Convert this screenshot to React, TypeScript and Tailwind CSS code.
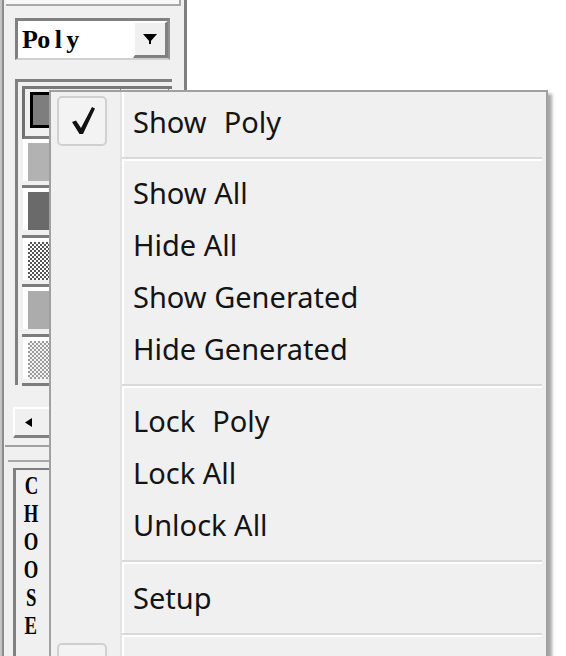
import React from "react";

function CheckIcon() {
  return (
    <svg width="46" height="46" viewBox="0 0 46 46">
      <path d="M13 24 L17 22.5 L22 30 L33 9 L36 10.5 L24 36 L20.5 36 Z" fill="#111" />
    </svg>
  );
}

function Row({ icon, children }: { icon?: React.ReactNode; children?: React.ReactNode }) {
  return (
    <div className="flex h-[52px] shrink-0">
      <div className="w-[69px] shrink-0 flex items-center pl-[6px]">{icon}</div>
      <div className="flex-1 flex items-center pl-[11px] border-l-[2px] border-[#e2e3e3] shadow-[inset_2px_0_0_#ffffff] whitespace-pre">
        {children}
      </div>
    </div>
  );
}

function Sep({ h = "h-[19px]" }: { h?: string }) {
  return (
    <div className={"flex shrink-0 " + h}>
      <div className="w-[69px] shrink-0" />
      <div className="flex-1 border-l-[2px] border-[#e2e3e3] shadow-[inset_2px_0_0_#ffffff] pt-[10px] pr-[4px]">
        <div className="h-[2px] bg-[#d9d9d9]" />
        <div className="h-[2px] bg-white" />
      </div>
    </div>
  );
}

function Box({ children }: { children?: React.ReactNode }) {
  return (
    <div className="w-[50px] h-[50px] rounded-[5px] border-[2px] border-[#d0d0d0] bg-[#f3f3f3] flex items-center justify-center">
      {children}
    </div>
  );
}

const swatches = [
  "bg-[#7e7e7e] border-[3px] border-black",
  "bg-[#b2b2b2]",
  "bg-[#6a6a6a]",
  "bg-[image:repeating-conic-gradient(#555555_0%_25%,#ffffff_0%_50%)] bg-[length:4px_4px]",
  "bg-[#acacac]",
  "bg-[image:repeating-conic-gradient(#9a9a9a_0%_25%,#f4f4f4_0%_50%)] bg-[length:4px_4px]",
];

export default function App() {
  return (
    <div className="relative w-[566px] h-[656px] overflow-hidden bg-white font-['Noto_Sans',sans-serif]">
      {/* left tool panel */}
      <div className="w-[187px] h-full flex bg-[#f0f0f0] border-r-[3px] border-[#808080]">
        <div className="w-[2px] bg-[#c4c4c4]" />
        <div className="w-[2px] bg-[#8c8c8c]" />
        <div className="flex-1 flex flex-col">
          <div className="h-[6px] mr-[3px] ml-[2px] border-b-[2px] border-r-[2px] border-[#a8a8a8] bg-[#f8f8f8] shrink-0" />

          {/* combobox */}
          <div className="mt-[12px] ml-[11px] w-[155px] h-[42px] shrink-0 flex border-t-[3px] border-l-[3px] border-r-[2px] border-b-[2px] border-t-[#808080] border-l-[#808080] border-r-[#909090] border-b-[#d0d0d0] bg-white">
            <div className="flex-1 flex items-center pl-[4px] overflow-hidden font-['Liberation_Serif',serif] font-bold text-[26px] leading-none text-black">
              {["P", "o", "l", "y"].map((c, i) => (
                <span key={i} className="inline-block w-[14.5px] text-center">
                  {c}
                </span>
              ))}
            </div>
            <div className="w-[35px] bg-[#f0f0f0] border-t-[2px] border-l-[2px] border-white border-b-[3px] border-r-[3px] border-b-[#808080] border-r-[#808080] flex items-center justify-center">
              <svg width="14" height="10" viewBox="0 0 14 10">
                <path d="M0 0 H14 L7 8 Z" fill="#000" />
                <rect x="6" y="7" width="2" height="3" fill="#000" />
              </svg>
            </div>
          </div>

          {/* list box */}
          <div className="mt-[19px] ml-[11px] w-[157px] h-[306px] shrink-0 border-t-[3px] border-l-[3px] border-[#808080] pt-[4px] pl-[4px] bg-[#f0f0f0]">
            <div className="relative border-t-[3px] border-[#787878] h-full">
              <div className="absolute left-[98px] top-0 w-[1px] h-[4px] bg-[#808080]" />
              <div className="absolute left-[146px] top-0 w-[1px] h-[4px] bg-[#808080]" />
              <div className="flex flex-col">
                {swatches.map((s, i) => (
                  <div
                    key={i}
                    className={
                      "h-[49.5px] shrink-0 border-b-[3px] border-[#7c7c7c] " +
                      (i === 0 ? "border-l-[3px] border-l-[#707070] pl-[5px] pt-[3px]" : "pl-[1px] pt-[0px]")
                    }
                  >
                    {i === 0 ? (
                      <div className={"h-[36px] w-[40px] " + s} />
                    ) : (
                      <div className="h-[42px] border-l-[5px] border-t-[4px] border-white bg-[#f6f6f6]">
                        <div className={"h-[38px] w-[40px] " + s} />
                      </div>
                    )}
                  </div>
                ))}
              </div>
            </div>
          </div>

          {/* scroll button */}
          <div className="mt-[22px] ml-[9px] w-[40px] h-[31px] shrink-0 bg-[#f0f0f0] border-t-[2px] border-l-[2px] border-white border-b-[3px] border-b-[#808080] flex items-center pl-[10px]">
            <svg width="7" height="9" viewBox="0 0 7 9">
              <path d="M7 0 V9 L0 4.5 Z" fill="#000" />
            </svg>
          </div>

          <div className="mt-[7px] ml-[1px] h-[2px] bg-[#a0a0a0] shrink-0" />
          <div className="mt-[13px] ml-[4px] h-[2px] bg-[#a8a8a8] shrink-0" />

          {/* CHOOSE */}
          <div className="mt-[6px] ml-[9px] flex-1 border-t-[2px] border-l-[3px] border-[#808080] pt-[2px]">
            <div className="w-[30px] flex flex-col items-center">
              {["C", "H", "O", "O", "S", "E"].map((c, i) => (
                <div key={i} className="h-[28px] flex items-center">
                  <span className="inline-block scale-x-[0.72] font-['Liberation_Serif',serif] font-bold text-[26px] leading-none text-black">
                    {c}
                  </span>
                </div>
              ))}
            </div>
          </div>
        </div>
      </div>

      {/* context menu */}
      <div className="absolute left-[49px] top-[90px] w-[499px] h-[620px] bg-[#f0f0f0] border-2 border-[#a0a0a0] shadow-[4px_4px_3px_rgba(0,0,0,0.35)] flex flex-col text-[29px] leading-none text-[#141414]">
        <div className="flex h-[3px] shrink-0">
          <div className="w-[69px] shrink-0" />
          <div className="flex-1 border-l-[2px] border-[#e2e3e3] shadow-[inset_2px_0_0_#ffffff]" />
        </div>
        <Row
          icon={
            <Box>
              <CheckIcon />
            </Box>
          }
        >
          <span className="[word-spacing:1px]">Show  Poly</span>
        </Row>
        <Sep h="h-[19px]" />
        <Row>Show All</Row>
        <Row>Hide All</Row>
        <Row>Show Generated</Row>
        <Row>Hide Generated</Row>
        <Sep h="h-[20px]" />
        <Row>
          <span className="[word-spacing:1px]">Lock  Poly</span>
        </Row>
        <Row>Lock All</Row>
        <Row>Unlock All</Row>
        <Sep h="h-[21px]" />
        <Row>Setup</Row>
        <Sep h="h-[19px]" />
        <Row icon={<Box />} />
      </div>
    </div>
  );
}
